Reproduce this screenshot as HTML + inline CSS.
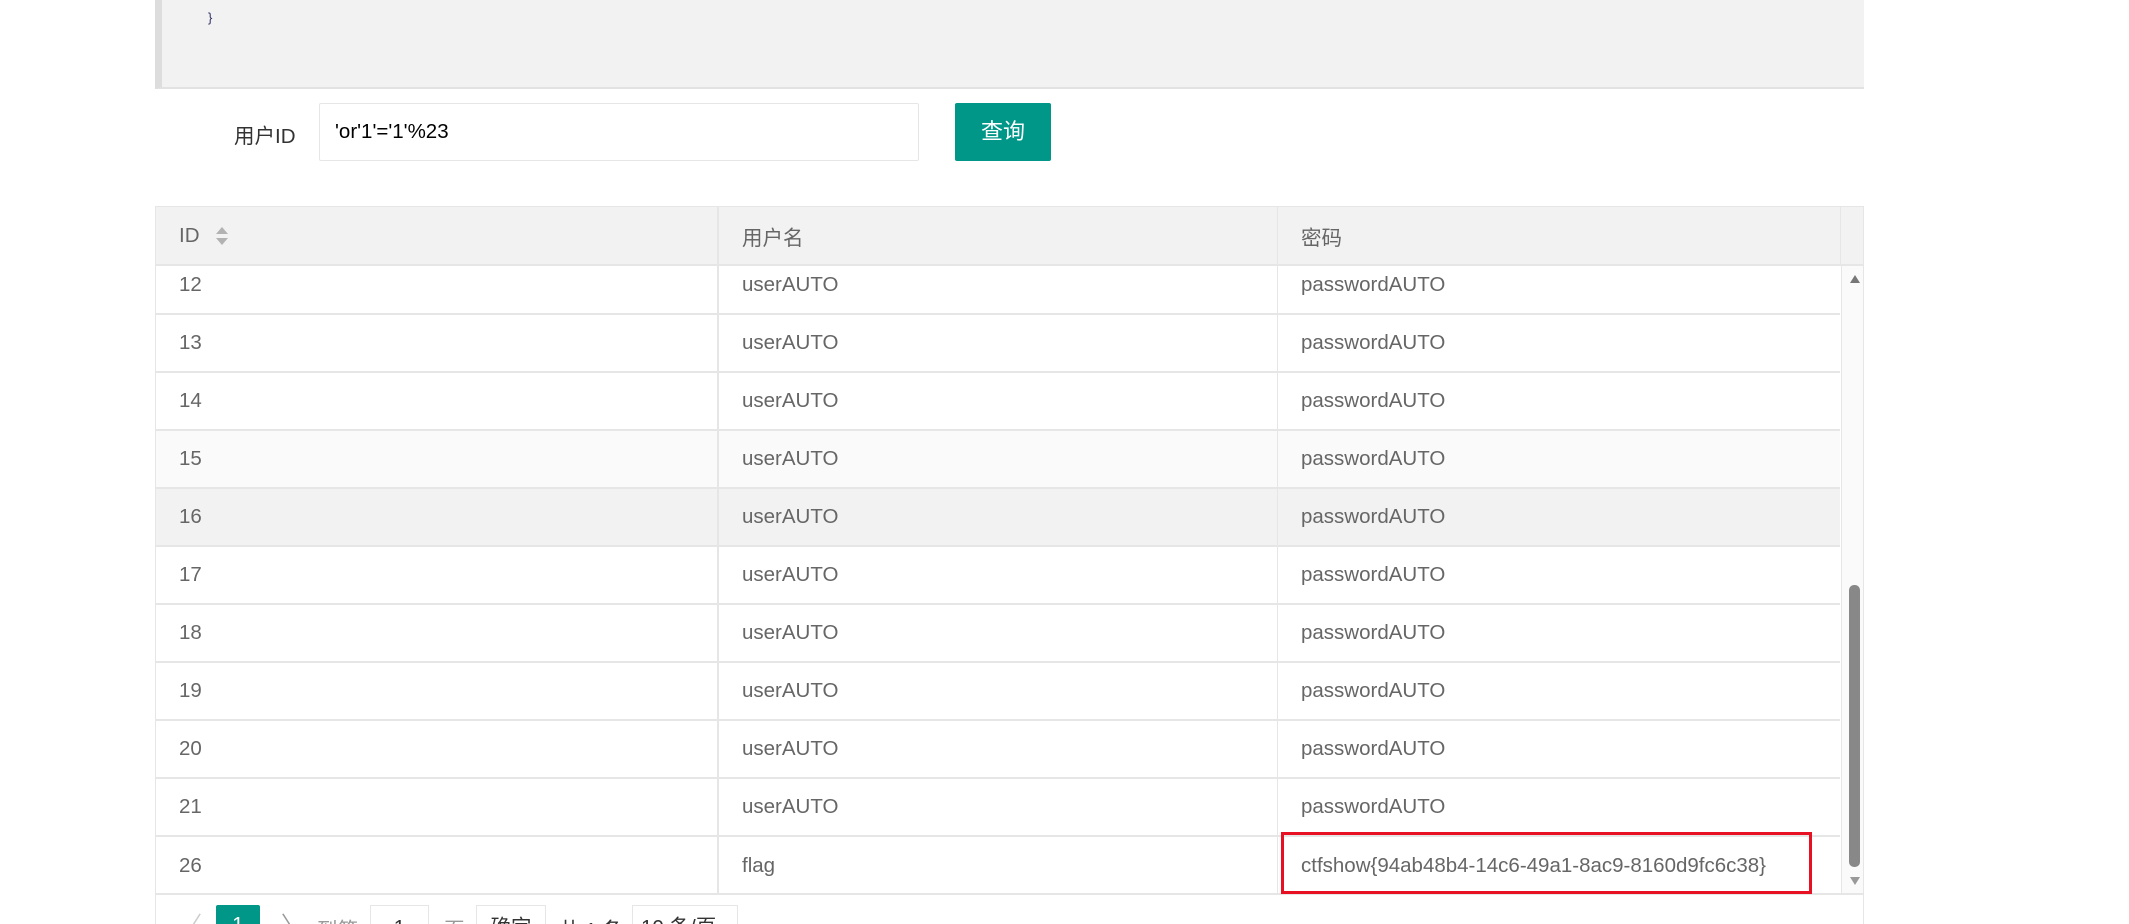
<!DOCTYPE html>
<html><head><meta charset="utf-8"><style>
*{margin:0;padding:0;box-sizing:border-box}
body{width:2129px;height:924px;overflow:hidden;background:#fff;font-family:"Liberation Sans","Noto Sans CJK SC",sans-serif;color:#666;font-size:20.5px;position:relative}
.a{position:absolute}
.code{left:155px;top:0;width:1709px;height:89px;background:#f2f2f2;border-left:7px solid #ddd;border-bottom:2px solid #e2e2e2}
.tbl{left:155px;top:206px;width:1709px;height:718px;border:1px solid #e6e6e6;border-bottom:none;overflow:hidden}
.hd{left:0;top:0;width:1709px;height:59px;background:#f2f2f2;border-bottom:2px solid #e6e6e6}
.row{position:absolute;left:0;width:1684px;height:58px;border-bottom:2px solid #e6e6e6}
.c{position:absolute;top:0;height:100%;display:flex;align-items:center;padding-left:23px}
.c1{left:0;width:561px}.c2{left:561px;width:560px;border-left:2px solid #e6e6e6}.c3{left:1121px;width:564px;border-left:1px solid #e6e6e6}
</style></head><body>
<div class="a code"><span class="a" style="left:46px;top:10px;font-size:13px;color:#336">}</span></div>
<div class="a" style="left:234px;top:119px;color:#333;font-size:20.5px">用户ID</div>
<div class="a" style="left:319px;top:103px;width:600px;height:58px;border:1px solid #e6e6e6;border-radius:2px;color:#000;padding-left:15px;line-height:56px;font-size:20.5px">'or'1'='1'%23</div>
<div class="a" style="left:955px;top:103px;width:96px;height:58px;background:#009688;color:#fff;border-radius:2px;text-align:center;line-height:58px;font-size:22px">查询</div>
<div class="a tbl">
<div class="a hd">
<div class="c c1">ID <svg width="16" height="22" style="margin-left:14px" viewBox="0 0 16 22"><path d="M8 2L14 9H2Z" fill="#b2b2b2"/><path d="M8 20L14 13H2Z" fill="#b2b2b2"/></svg></div>
<div class="c c2">用户名</div><div class="c c3">密码</div>
<div class="a" style="left:1684px;top:0;width:1px;height:59px;background:#e6e6e6"></div>
</div>
<div class="row" style="top:59px;height:49px"><div class="c c1" style="align-items:flex-start;padding-top:7px">12</div><div class="c c2" style="align-items:flex-start;padding-top:7px">userAUTO</div><div class="c c3" style="align-items:flex-start;padding-top:7px">passwordAUTO</div></div>
<div class="row" style="top:108px"><div class="c c1">13</div><div class="c c2">userAUTO</div><div class="c c3">passwordAUTO</div></div>
<div class="row" style="top:166px"><div class="c c1">14</div><div class="c c2">userAUTO</div><div class="c c3">passwordAUTO</div></div>
<div class="row" style="top:224px;background:#fafafa"><div class="c c1">15</div><div class="c c2">userAUTO</div><div class="c c3">passwordAUTO</div></div>
<div class="row" style="top:282px;background:#f2f2f2"><div class="c c1">16</div><div class="c c2">userAUTO</div><div class="c c3">passwordAUTO</div></div>
<div class="row" style="top:340px"><div class="c c1">17</div><div class="c c2">userAUTO</div><div class="c c3">passwordAUTO</div></div>
<div class="row" style="top:398px"><div class="c c1">18</div><div class="c c2">userAUTO</div><div class="c c3">passwordAUTO</div></div>
<div class="row" style="top:456px"><div class="c c1">19</div><div class="c c2">userAUTO</div><div class="c c3">passwordAUTO</div></div>
<div class="row" style="top:514px"><div class="c c1">20</div><div class="c c2">userAUTO</div><div class="c c3">passwordAUTO</div></div>
<div class="row" style="top:572px"><div class="c c1">21</div><div class="c c2">userAUTO</div><div class="c c3">passwordAUTO</div></div>
<div class="row" style="top:630px;border-bottom:none"><div class="c c1">26</div><div class="c c2">flag</div><div class="c c3">ctfshow{94ab48b4-14c6-49a1-8ac9-8160d9fc6c38}</div></div>
<div class="a" style="left:1685px;top:59px;width:23px;height:627px;background:#fafafa;border-left:1px solid #e6e6e6"></div>
<div class="a" style="left:1693px;top:378px;width:11px;height:282px;background:#888;border-radius:5px"></div>
<svg class="a" style="left:1692px;top:66px" width="14" height="12"><path d="M7 2L12 10H2Z" fill="#777"/></svg>
<svg class="a" style="left:1692px;top:668px" width="14" height="12"><path d="M7 10L12 2H2Z" fill="#999"/></svg>
<div class="a" style="left:0;top:686px;width:1709px;height:2px;background:#e6e6e6"></div>
<div class="a" style="left:1125px;top:625px;width:531px;height:62px;border:3px solid #e81123"></div>
<div class="a" style="left:24px;top:700px;color:#ccc;font-size:22px">〈</div>
<div class="a" style="left:60px;top:698px;width:44px;height:40px;background:#009688;color:#fff;text-align:center;line-height:40px;border-radius:2px">1</div>
<div class="a" style="left:125px;top:700px;color:#999;font-size:22px">〉</div>
<div class="a" style="left:161px;top:706px;color:#999">到第</div>
<div class="a" style="left:214px;top:698px;width:59px;height:40px;border:1px solid #e6e6e6;text-align:center;line-height:44px;color:#333">1</div>
<div class="a" style="left:288px;top:706px;color:#999">页</div>
<div class="a" style="left:320px;top:698px;width:70px;height:40px;border:1px solid #e6e6e6;text-align:center;line-height:44px;color:#333">确定</div>
<div class="a" style="left:403px;top:706px;color:#333">共 1 条</div>
<div class="a" style="left:476px;top:698px;width:106px;height:40px;border:1px solid #e6e6e6;line-height:44px;padding-left:8px;color:#333;white-space:nowrap;overflow:hidden">10 条/页 ⌄</div>
</div>
</body></html>
